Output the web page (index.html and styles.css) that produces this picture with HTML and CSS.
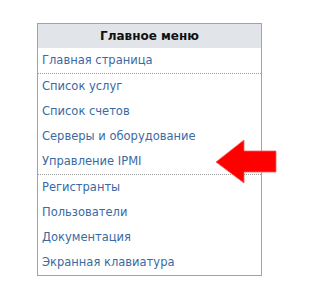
FILE: index.html
```html
<!DOCTYPE html>
<html>
<head>
<meta charset="utf-8">
<link rel="stylesheet" href="styles.css">
</head>
<body>
<div class="page">
  <div class="menu">
    <div class="menu-head">Главное меню</div>
    <a class="item sep" href="#">Главная страница</a>
    <a class="item" href="#">Список услуг</a>
    <a class="item" href="#">Список счетов</a>
    <a class="item" href="#">Серверы и оборудование</a>
    <a class="item sep" href="#">Управление IPMI</a>
    <a class="item" href="#">Регистранты</a>
    <a class="item" href="#">Пользователи</a>
    <a class="item" href="#">Документация</a>
    <a class="item" href="#">Экранная клавиатура</a>
  </div>
  <svg class="arrow" width="62" height="45" viewBox="0 0 62 45">
    <polygon points="1,23 29,1 29,12 61,12 61,33 29,33 29,44" fill="#ff0000" stroke="#ff5a5a" stroke-width="0.8" stroke-linejoin="miter"/>
  </svg>
</div>
</body>
</html>
```
FILE: styles.css
```css
html, body {
  margin: 0;
  padding: 0;
  background: #ffffff;
}
.page {
  position: relative;
  width: 300px;
  height: 300px;
  padding: 23px 0 0 37px;
  box-sizing: border-box;
}
.menu {
  width: 225px;
  box-sizing: border-box;
  border: 1px solid #a3a3a3;
  display: flex;
  flex-direction: column;
  font-family: "DejaVu Sans", Verdana, sans-serif;
  font-size: 11.5px;
}
.menu-head {
  height: 24px;
  line-height: 25px;
  background: #e1e4e8;
  text-align: center;
  font-weight: bold;
  font-size: 12px;
  color: #111;
}
.item {
  display: block;
  height: 25px;
  line-height: 25px;
  padding-left: 4px;
  color: #3a6aa3;
  text-decoration: none;
}
.item.sep {
  border-bottom: 1px dotted #9a9a9a;
}
.arrow {
  position: absolute;
  left: 215px;
  top: 139px;
}
```
